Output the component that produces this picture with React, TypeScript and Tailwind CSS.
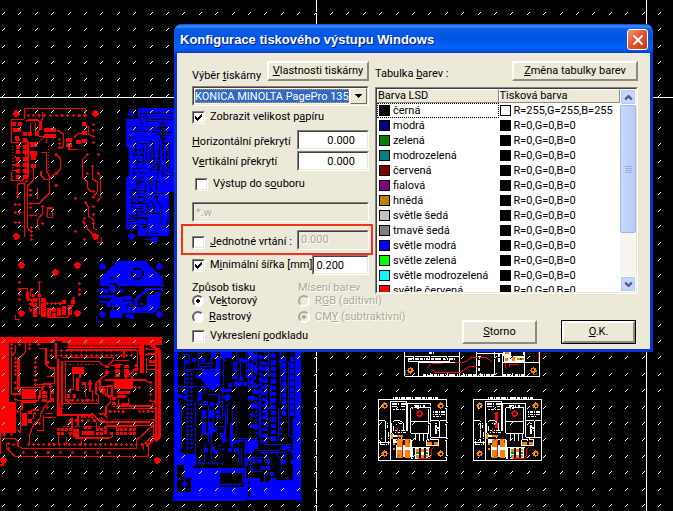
import { ChevronDown, ChevronUp, X } from "lucide-react";
import { FC, ReactNode } from "react";
import clsx from "clsx";

type TColor = { name: string; swatch: string; print: string; printSwatch: string };
type TPoint = [number, number];

const BLACK = "R=0,G=0,B=0";

const colors: TColor[] = [
  { name: "černá", swatch: "bg-black", print: "R=255,G=255,B=255", printSwatch: "bg-white" },
  { name: "modrá", swatch: "bg-[#000080]", print: BLACK, printSwatch: "bg-black" },
  { name: "zelená", swatch: "bg-[#008000]", print: BLACK, printSwatch: "bg-black" },
  { name: "modrozelená", swatch: "bg-[#008080]", print: BLACK, printSwatch: "bg-black" },
  { name: "červená", swatch: "bg-[#800000]", print: BLACK, printSwatch: "bg-black" },
  { name: "fialová", swatch: "bg-[#800080]", print: BLACK, printSwatch: "bg-black" },
  { name: "hnědá", swatch: "bg-[#c08000]", print: BLACK, printSwatch: "bg-black" },
  { name: "světle šedá", swatch: "bg-[#c0c0c0]", print: BLACK, printSwatch: "bg-black" },
  { name: "tmavě šedá", swatch: "bg-[#808080]", print: BLACK, printSwatch: "bg-black" },
  { name: "světle modrá", swatch: "bg-[#0000ff]", print: BLACK, printSwatch: "bg-black" },
  { name: "světle zelená", swatch: "bg-[#00ff00]", print: BLACK, printSwatch: "bg-black" },
  { name: "světle modrozelená", swatch: "bg-[#00ffff]", print: BLACK, printSwatch: "bg-black" },
  { name: "světle červená", swatch: "bg-[#ff0000]", print: BLACK, printSwatch: "bg-black" },
];

/* ---------- board drawing ---------- */

const RED = "#ff0000";
const BLUE = "#0000ff";

// small plus-shaped vias
const vias = (points: TPoint[]) =>
  points.map(([x, y]) => `M${x - 4} ${y}h9M${x} ${y - 4}v9`).join("");

const row = (x: number, y: number, count: number, step: number): TPoint[] =>
  Array.from({ length: count }, (_, i) => [x + i * step, y]);

const column = (x: number, y: number, count: number, step: number): TPoint[] =>
  Array.from({ length: count }, (_, i) => [x, y + i * step]);

const pads = (points: TPoint[], w = 10, h = 10) =>
  points.map(([x, y]) => `M${x - w / 2} ${y - h / 2}h${w}v${h}h-${w}z`).join("");

const holes = (points: TPoint[]) =>
  points
    .map(([x, y]) => `M${x - 7} ${y - 7}h14v14h-14zM${x - 10} ${y - 3}h20v6h-20zM${x - 3} ${y - 10}h6v20h-6z`)
    .join("");

const ticks = () => {
  let d = "";
  for (let r = 0; r < 90; r++) {
    for (let c = 0; c < 140; c++) {
      const x = Math.round(2 + c * 16.4);
      const y = Math.round(12 + r * 16.4);
      d += `M${x} ${y + 2}h1v1h-1zM${x + 1} ${y + 1}h1v1h-1zM${x + 2} ${y}h1v1h-1z`;
    }
  }
  return d;
};

type TLayerProps = { color: string; lines?: string; width?: number; fill?: string };

const Layer: FC<TLayerProps> = ({ color, lines, width = 4, fill }) => (
  <>
    {fill && <path d={fill} fill={color} />}
    {lines && <path d={lines} fill="none" stroke={color} strokeWidth={width} />}
  </>
);

const RedBoard: FC = () => (
  <g transform="translate(0 90) scale(0.33333)">
    <Layer
      color={RED}
      lines={
        "M74 88V56H257V78M73 89H35V157H73M35 245V272H65L77 260V150M83 150V268L73 282V440M52 320V285L56 280H72M100 230V270L82 288V412L94 425M77 95L84 90H112L118 96V118M127 66V88L123 94V118L112 124M91 98V128M106 100V128M118 140H133L116 157H86V260M123 187H140V242L149 262V308L118 340H88M112 294V326M123 243V256L133 268H148M168 194L181 206V237L168 252L156 258L149 266M172 120L190 132V170L182 176M140 148V160M262 194L247 209V262L262 276V294L274 305H283M277 230V266L292 276V305L280 318M292 246L301 256V325L290 335M258 338L266 352V378L280 390V414L290 420M207 170V178H233M223 145V140L235 130H250M253 103L266 112V133L278 139M142 354H158V383H142ZM127 350V372L112 390V412L120 420M112 376H92M250 390V398L266 420L280 435M304 440V458H290" +
        vias([
          ...row(85, 76, 4, 16), ...row(152, 76, 7, 17), [256, 76],
          ...column(280, 103, 4, 18), [168, 194], [168, 249], [168, 286], [226, 325], [262, 194], [295, 194], [277, 230], [262, 250], [295, 250],
          [91, 300], [91, 315], [91, 341], [91, 352], [91, 377], [46, 344], [58, 344], [46, 367], [58, 367], [127, 350], [127, 400],
          [280, 305], [280, 322], [256, 338], [280, 350], [280, 374], [253, 385], [253, 400], [280, 400], [52, 308], [52, 320],
          [46, 397], [58, 397], [94, 412], [94, 424], [94, 436], [94, 448], [226, 424], [253, 448], ...column(178, 148, 3, 12),
        ])
      }
      fill={
        holes([[49, 71], [286, 71], [49, 439], [286, 439]]) +
        pads([[41, 102], [60, 102], [46, 120], [58, 120], [75, 131], [90, 131], [110, 131], [52, 143], [75, 150], [55, 170], [76, 170], [55, 187], [76, 187], [55, 206], [76, 206], [55, 225], [76, 225], [55, 242], [76, 242], [55, 260], [76, 260], [253, 103]], 12, 12) +
        pads([[207, 150], [207, 166], [235, 157], [253, 130], [253, 153], [100, 205], [100, 228]], 16, 13) +
        "M132 114h36v11h-36zM132 132h36v11h-36zM90 158h21v12h-21zM90 183h21v14h-21z"
      }
    />
    <path d="M38 168V270M145 168V258" stroke={RED} strokeWidth="3" strokeDasharray="3 6" />
    <path d="M48 150h12M48 170h14M42 198l10 8M38 225h18M40 242h16" stroke={RED} strokeWidth="4" />
  </g>
);

const BlueBoard: FC = () => (
  <g transform="translate(0 90) scale(0.33333)">
    <path
      d={"M414 54H540V306H508V437H414V418H378V260H388V170H378V87H414z" + holes([[394, 71], [394, 439]]) + "M454 442h20v14h-20zM436 448h18v3h-18z"}
      fill={BLUE}
    />
    <path d={holes([[394, 71]])} fill="#0000c0" />
    <Layer
      color="#000"
      width={3}
      lines={
        "M422 70V98L430 106M422 70H520M440 64V96H470M452 72H520M452 88H520M392 125H470L490 145V250M384 172V250M396 128L388 136V160M408 140V190L414 200V236M418 160H440V208M430 172V226M450 150L462 160V216L474 226V262M482 100V150M496 100V150M472 112H510M472 120H500M472 128H514M480 136H506M478 150V240L494 256H520M486 160H500V226M508 150V240M445 176L452 182V250M420 260L412 268V290L400 302V320M428 258L420 268V292M392 302H430L440 312M392 312H420M436 280V330L424 342H392M452 262V300L462 310H500M470 270V300M392 330H410L420 340H442V372M392 344L404 356H430M384 370L396 382H440M450 330L462 342V370M474 318V340L486 350V380M382 394H406L418 404H440M384 404H400M410 376L420 386H440M444 400V440M436 370H484V384M486 388V412H502V394M452 432H476"
      }
    />
    <path
      d="M388 110H480M430 80H520M386 188V262M398 180H424M400 196H430M414 216H460M398 236H448M400 250H440M490 96V200M502 158V250M462 180V250M476 180V250M420 276H500M394 322H470M394 336H430M396 350H450M404 366H450M386 376H430M384 388H446M408 412H440M440 360V430M470 122V140"
      fill="none"
      stroke="#000"
      strokeWidth="5"
      strokeDasharray="6 4 3 7 9 5 3 11"
    />
  </g>
);

const SmallRedBoard: FC = () => (
  <g transform="translate(0 210) scale(0.33333)">
    <Layer
      color={RED}
      lines={
        "M46 315V328H60M55 236H83V262L100 280M118 218V312M58 218V222M83 262V270L100 268M88 300V290M140 322H202L206 316V300L222 282M220 265V280M135 270V320M150 280H185M92 240V262M206 300L216 290" +
        vias([[58, 218], [118, 218], [58, 238], [94, 238], [58, 254], [58, 268], [238, 220], [238, 238], [238, 252], [220, 265], [142, 281], [154, 281], [166, 281], [180, 281], [91, 282], [91, 300], [206, 295]])
      }
      fill={
        holes([[64, 166], [232, 166], [166, 187], [64, 310], [232, 310]]) +
        pads([[83, 252], [100, 256], [118, 256], [83, 262], [94, 284]], 10, 10) +
        pads([[106, 271], [106, 286], [106, 302], [106, 315], [131, 271], [131, 286], [131, 302], [131, 315], [147, 300], [147, 314], [162, 300], [162, 316], [177, 300], [177, 312], [192, 277], [192, 295], [192, 308], [219, 277], [210, 292], [210, 308]], 13, 13) +
        "M98 264h20v4h-20zM112 290h14v5h-14z"
      }
    />
  </g>
);

const SmallBlueBoard: FC = () => (
  <g transform="translate(0 210) scale(0.33333)">
    <path
      d={
        "M351 153H437L490 206V220H484V228H356L348 218H334L322 228H300V206zM298 254H342L352 262H368V272L384 292H430L440 282V262L448 254H462L470 246H488V240H446L410 272V290H402V268L440 234H488L480 262V292L462 309H372L348 290L338 279H298V272H330L336 264H298z" +
        holes([[307, 170], [478, 170], [307, 313], [478, 313]]) +
        pads([[340, 232], [340, 242], [306, 240], [318, 242], [364, 242], [377, 263], [390, 263], [377, 278], [390, 278], [327, 286], [337, 307], [349, 307], [360, 307], [337, 319], [349, 319], [360, 319], [385, 317], [397, 320]], 12, 12)
      }
      fill={BLUE}
    />
    <Layer
      color={BLUE}
      lines={"M289 318V334H302M300 226H326M356 226V250M330 245V226L340 220M338 280V302M370 300V316M300 275H330" + vias([[410, 268], [410, 282], [425, 282], [300, 240], [488, 225]])}
    />
    <path d="M412 174a17 17 0 1 0 1 0" fill="none" stroke="#000" strokeWidth="5" strokeDasharray="14 4" />
    <path d="M404 180h16M400 200h5M422 198h6M330 206h22M332 203h4M340 203h3" stroke="#000" strokeWidth="3" />
  </g>
);

const LargeRedBoard: FC = () => (
  <g transform="translate(0 330) scale(0.33333)">
    <path
      d={
        "M0 21H486V45H462L482 60V325L472 335H466V60L448 45H432V130H420V50H205V40H186V34H164V88H180V230L186 236V252H275V258H172V38H27V215H49V308H0z" +
        holes([[10, 391], [472, 391], [308, 181]]) +
        "M343 150h56v27h-56zM66 178h42v30h-42zM216 110h36v22h-36zM218 296h20v24h-20zM66 248h14v40h-14zM228 144h10v38h-10zM246 304h36v12h-36zM52 88h8v92h-8z"
      }
      fill={RED}
    />
    <Layer
      color={RED}
      lines={
        "M0 405H12M2 310V370L6 366M10 326H46L54 334V346L66 356H410V330L460 285V268H330M20 340V355L45 380H440L446 374V340L478 316M35 60V194H60V172M46 46V66L35 78M77 36V64L58 84M40 190H70M118 55H138V104L150 114H164V160H130M142 140H162M104 164H154M60 172H126V180M120 180V204L108 216H66V240M52 212H116V196M62 232V308L52 300M152 170V210L132 232L122 254V262L100 286L88 316V344M130 300V262H168M138 250H160M112 302H130V256M186 94V238M186 220H296V200L288 190V160L304 144L320 134V116M196 94H296L310 106H346M196 94V208L216 224M186 82H340V92L322 108M202 52H420V74M202 60H410M428 60V120M412 60V120H400M346 92H386M346 104H370M372 60V84M378 140V148L396 148V138M316 150H436L448 158H456M296 250H310L324 268H468V310L430 344V360M302 262L322 280V286H460M318 188V196L332 204V216L318 228V252H300M338 230H356V208M362 204V196M386 204V222H362M352 228H458V216L478 202M350 236H468M270 258L290 278M275 250L300 276H450M175 312V346M200 320V346M224 324H330L340 316M244 324V346M320 286V306M350 282V306M330 288H410M216 264V296M234 256V288M210 276L200 286M290 280V296M404 120L390 132H378V140M240 130V144M220 130V178H210V190M256 160V200M278 180V206M270 150V186M340 170H300M300 150V176M84 250L100 240H116M84 276L100 264V250M460 286V330L440 352M448 94H476M444 106H480M440 118H474M438 72H478M440 58H480M440 84V130"
      }
    />
    <Layer
      color={RED}
      lines={vias([
        ...row(154, 61, 17, 15), ...row(154, 76, 17, 15), ...row(85, 343, 24, 15.5), ...row(70, 367, 8, 37), [34, 43], [34, 55], [88, 43], [88, 55], [115, 43], [58, 43],
        ...column(46, 85, 5, 12), ...column(106, 85, 7, 13), ...column(46, 158, 4, 17), ...row(330, 244, 4, 13), ...row(418, 244, 4, 13), ...row(202, 211, 6, 15), ...row(210, 272, 6, 18),
        ...column(451, 158, 5, 18), [439, 43], [439, 55], ...column(408, 106, 3, 12), [12, 314], [34, 314], [26, 341], [26, 356], [40, 343], [406, 172], [418, 172], [130, 170], [150, 170], [142, 232], [118, 280], [103, 250], [52, 244],
      ])}
      fill={
        pads([[143, 98], [452, 95], [464, 95], [176, 299], [188, 299], [200, 299], [212, 299], [176, 310], [188, 310], [212, 310], [256, 293], [268, 293], [294, 299], [306, 299], [294, 310], [306, 310], [318, 293], [318, 306], [336, 310], [352, 299], [352, 311], [366, 299], [366, 311], [378, 299], [378, 311], [392, 299], [392, 311], [403, 299], [403, 311], [206, 198], [224, 198]], 9, 10) +
        pads([[134, 188], [134, 199], [134, 211], [156, 188], [156, 210], [90, 248], [90, 273], [252, 161], [270, 161], [321, 110], [321, 127], [352, 110], [352, 123], [352, 136], [380, 110], [380, 123], [380, 136], [342, 205], [342, 221], [358, 187], [370, 187], [382, 187], [358, 200], [370, 200]], 14, 10)
      }
    />
    <path d="M322 168h14v30h-14z" fill="none" stroke={RED} strokeWidth="4" />
    <path d="M196 104H290M196 211H290M190 290H300M312 290H406M230 262H288" stroke={RED} strokeWidth="5" strokeDasharray="4 8 6 5" />
    <path d="M181 226L196 240M300 246L330 276M322 108L352 96M456 216L478 236M450 320L478 344M306 270H450" stroke="#000" strokeWidth="2" />
    <path d="M180 88V220M206 46H420M474 70V320" stroke="#000" strokeWidth="2" />
  </g>
);

const LargeBlueBoard: FC = () => (
  <g transform="translate(165 345) scale(0.33333)">
    <path
      d={
        "M27 0H38V170L44 182V320L62 328H92V360L80 368H240V286L204 296V310L194 300V230L204 240V285H278V312H268V324H242V336H310V340H258V348H250V362H244V398H284V412H368V406H384V224L394 216V0H408V464H242V467H24V442H90V404L106 382H156V442H60V360H36V440H27zM110 86H92V98H104L136 134H150L164 122V0H154V72H110zM140 0h62v40h-62z" +
        holes([[187, 157]]) +
        "M256 400h28v60h-28zM312 404h58v10h-58zM170 132h30v10h-30zM165 0h30v8h-30z"
      }
      fill={BLUE}
    />
    <path d="M164 384h74v42h-74zM172 42h30v80h-30zM44 400h34v42h-34zM248 408h8v48h-8z" fill="#000" />
    <path
      d={
        pads(column(298, 38, 15, 18), 15, 11) +
        pads(column(326, 34, 14, 19), 14, 13) +
        pads(column(357, 44, 10, 18), 12, 13) +
        pads(column(381, 44, 10, 18), 10, 13) +
        pads([[88, 44], [114, 44], [64, 50], [210, 58], [210, 72], [206, 97], [227, 46], [227, 103], [240, 47], [240, 118], [194, 119], [212, 118], [225, 118], [262, 35], [274, 35], [262, 68], [274, 74], [252, 92], [262, 110], [274, 122], [270, 142], [280, 142], [254, 160], [265, 160], [262, 182], [274, 182], [262, 210], [262, 242], [274, 246], [60, 140], [106, 145], [106, 158], [124, 174], [140, 176], [118, 200], [118, 212], [138, 200], [138, 212], [158, 202], [118, 238], [118, 250], [118, 262], [138, 238], [138, 250], [138, 262], [158, 216], [150, 256], [170, 270], [176, 284], [132, 392], [112, 390], [90, 378], [60, 418], [60, 160], [44, 154]], 12, 12) +
        pads([[144, 312], [154, 322], [122, 316], [196, 314], [214, 314], [270, 348], [286, 348], [310, 348], [310, 368], [294, 370], [322, 386], [326, 404], [357, 310], [370, 310], [357, 352], [384, 352], [384, 320], [396, 320], [272, 451], [294, 451], [334, 451], [354, 451], [306, 440], [346, 425], [356, 332]], 12, 12)
      }
      fill={BLUE}
    />
    <Layer
      color={BLUE}
      width={3}
      lines={
        "M36 125H130M60 26V118M52 30H74V60M100 20V64H140M140 20V56M62 74H110M104 56H148M176 26V130L164 140V180L182 200V280L200 300M120 110V140L92 170V330M40 170V300M50 180V316M100 140V180H130V290L120 300V350M130 150H160V180H146V232L158 246H178V290L160 306M140 270V350M92 340L110 352M108 270H140M226 40V104M216 20V130M252 20V130L266 140M284 150V270L270 290M288 40V290L300 300H380M370 50V270L380 276M346 24V170M340 50H350M392 0V220M310 24V100H296M318 120V190H296M340 190V280L330 290M280 316H340L350 308H380M286 324H350L370 318H400M292 320L310 340V372M330 320L350 350V372L340 380M244 420V462H400M256 348V380H292M300 380V440M370 396V440L356 446M320 400V454M340 424V448M230 310V360M222 312V350M172 220V130M200 0V44M198 170L188 180V240M204 180V240M232 386V418H170M150 370V434M100 430H140M100 410H150M84 350V374M300 0V30M324 0V30M262 0V130M274 0V90M244 0V100M410 456V470H396M60 350V440M222 280H280"
      }
    />
    <Layer
      color={BLUE}
      width={3}
      lines={vias([
        ...column(68, 75, 19, 13), ...column(80, 75, 19, 13), ...row(88, 355, 7, 14), ...row(172, 418, 5, 13), ...column(346, 26, 4, 13), ...column(346, 218, 5, 16), ...column(274, 160, 9, 13), ...column(250, 30, 6, 16), [178, 46], [178, 20], [142, 20], [130, 56], [175, 314], [70, 336], [320, 430], [362, 438], [370, 54], ...row(92, 418, 4, 14), [250, 420], [262, 374], [256, 358], [46, 348], [58, 348], [44, 404],
      ])}
    />
    <path d="M214 178V270M106 186V262M188 176V200M264 70V250" stroke={BLUE} strokeWidth="3" strokeDasharray="3 5" />
    <path d="M256 20V130M270 26V130M286 30V150M304 30V290" stroke={BLUE} strokeWidth="8" strokeDasharray="12 8 5 9" />
  </g>
);

const PlacementBoard: FC<{ x: number; alt?: boolean }> = ({ x, alt }) => (
  <g transform={`translate(${x} 398) scale(0.33333)`}>
    <path
      d="M2 4H207V188H2zM38 188V10H86V98M90 98V16H158V68H182M98 30H152V106H98zM98 70H152M112 106V126M124 106V130M136 106V130M148 106V124M158 68V118H206M2 68H22V134H2M185 68H206V118H185zM40 76V104L46 110M70 110V126H100V150M44 70Q64 60 78 78V98M146 126H182V144H146z"
      fill="none"
      stroke="#fff"
      strokeWidth="3"
    />
    <path
      d="M44 0H180M42 18H84M42 26H80M46 34H80M44 98H86M50 104H84M164 42H200M164 50H202M166 56H192M170 90H182M172 98H184M46 84V100M56 76H76M8 122V142M14 134H40M6 140H30M32 102V140M28 74V90M120 24V32M174 74V108M108 24H142"
      fill="none"
      stroke="#fff"
      strokeWidth="4"
      strokeDasharray="5 2 9 3 3 4 12 2"
    />
    <path d="M46 124h12v10h-12zM82 122h18v28h-18zM54 142h46v34h-46zM46 110h26v8h-26zM98 148h58v34h-58z" fill="#fff" />
    <path d="M106 150h6v32h-6zM122 150h6v32h-6zM137 150h7v32h-7zM152 150h4v32h-4z" fill="#000" />
    <path
      d="M58 124h17v24h-17zM80 124h16v24h-16zM58 156h17v24h-17zM80 156h16v24h-16zM56 110h18v7h-18zM39 108h6v14h-6zM148 131h13v11h-13zM168 131h12v11h-12zM115 154h7v7h-7zM115 172h7v7h-7zM130 154h7v7h-7zM130 172h7v7h-7zM145 152h6v8h-6zM145 170h6v7h-6zM46 134h5v8h-5zM46 150h5v6h-5z"
      fill="#ff8000"
    />
    <path d="M115 163h7v5h-7zM145 162h6v5h-6z" fill="#00a000" />
    <path d="M74 128V180M96 126V136M119 181H156L162 170V152L168 148M20 94h4M60 106V90" fill="none" stroke={RED} strokeWidth="3" />
    {alt && <path d="M71 42v26M71 72v18" stroke={RED} strokeWidth="9" />}
    {[[20, 23], [188, 23], [20, 167], [188, 167]].map(([cx, cy]) => (
      <g key={`${cx}-${cy}`} fill="none" stroke="#ff8000">
        <circle cx={cx} cy={cy} r="6" strokeWidth="5" />
        <path d={`M${cx - 10} ${cy}h4M${cx + 6} ${cy}h4M${cx} ${cy - 10}v4M${cx} ${cy + 6}v4`} strokeWidth="4" />
      </g>
    ))}
    <circle cx="125" cy="47" r="7" fill="none" stroke={RED} strokeWidth="5" />
    <path d="M114 47h6M130 47h6M125 36v6M125 52v6" stroke={RED} strokeWidth="4" />
    {alt && <path d="M20 20l5-5M20 172l4-4M62 128l6-6M66 162l6-6" stroke="#40a0ff" strokeWidth="3" />}
  </g>
);

const TopPlacementBoard: FC = () => (
  <g transform="translate(370 345) scale(0.33333)">
    <path
      d="M104 0V94H509V0M104 34H268V94M146 52V94M146 52H268M268 10V94M320 10V94M374 10V94M398 52V94M398 52H464V94M464 54H509M320 26H398V52M116 38V50H240V38M464 54V20M104 20H268"
      fill="none"
      stroke="#fff"
      strokeWidth="3"
    />
    <path d="M116 43H256M176 24H196M158 90H264M276 90H320M330 90H372M400 90H462M388 28V50M374 40V80M328 34V82M400 30H420M462 22V50" stroke="#fff" strokeWidth="5" strokeDasharray="9 3 4 2 12 4" />
    <path d="M402 34h64v16h-64zM400 20h22v12h-22z" fill="#fff" />
    <path d="M172 68L182 56H216M186 74L196 82H270L296 66H322M256 54L290 50L300 38H350L366 50M406 54V68M420 66V58H446M490 44v4M506 22V50" fill="none" stroke={RED} strokeWidth="3" />
    <path d="M406 38h8v9h-8zM425 37h10v11h-10zM442 39h7v7h-7zM456 39h6v7h-6zM404 22h12v6h-12z" fill="#ff8000" />
    <path d="M106 76V88H116M488 88H500V78" fill="none" stroke="#008000" strokeWidth="3" />
    <path d="M450 39h5v7h-5z" fill="#008000" />
    {[121, 490].map((cx) => (
      <g key={cx} fill="none" stroke="#ff8000">
        <circle cx={cx} cy="76" r="6" strokeWidth="5" />
        <path d={`M${cx - 10} 76h4M${cx + 6} 76h4M${cx} 66v4M${cx} 82v4`} strokeWidth="4" />
      </g>
    ))}
  </g>
);

const BoardCanvas: FC = () => (
  <svg className="absolute inset-0 size-full" shapeRendering="crispEdges" aria-hidden="true">
    <rect width="100%" height="100%" fill="#000" />
    <RedBoard />
    <BlueBoard />
    <SmallRedBoard />
    <SmallBlueBoard />
    <LargeRedBoard />
    <LargeBlueBoard />
    <TopPlacementBoard />
    <PlacementBoard x={378} />
    <PlacementBoard x={473} alt />
    <rect x="316" y="0" width="1" height="100%" fill="#fff" />
    <rect x="646" y="0" width="1" height="100%" fill="#fff" />
    <rect x="0" y="97" width="100%" height="1" fill="#fff" />
    <path d={ticks()} fill="#fff" className="mix-blend-difference" />
  </svg>
);

/* ---------- dialog controls ---------- */

const sunken = "border border-t-[#808080] border-l-[#808080] border-b-white border-r-white";
const sunkenInner = "border border-t-[#404040] border-l-[#404040] border-b-[#ece9d8] border-r-[#ece9d8]";
const disabledText = "text-[#aca899] [text-shadow:1px_1px_0_#fff]";

type TButtonProps = { children: ReactNode; className?: string; isDefault?: boolean };

const Button: FC<TButtonProps> = ({ children, className, isDefault }) => (
  <button
    type="button"
    className={clsx(
      "bg-[#ece9d8] text-center whitespace-nowrap",
      isDefault && "border border-black",
      className
    )}
  >
    <span className="flex size-full items-center justify-center border-2 border-t-white border-l-white border-b-[#8d8a7d] border-r-[#8d8a7d]">
      <span>{children}</span>
    </span>
  </button>
);

type TCheckProps = { id: string; children: ReactNode; checked?: boolean; className?: string };

const Checkbox: FC<TCheckProps> = ({ id, children, checked, className }) => (
  <div className={clsx("flex h-4 items-center gap-[5px]", className)}>
    <span className={clsx("grid size-[13px] shrink-0", sunken)}>
      <input
        id={id}
        type="checkbox"
        defaultChecked={checked}
        className={clsx("peer col-start-1 row-start-1 size-full appearance-none bg-white", sunkenInner)}
      />
      <svg
        viewBox="0 0 11 11"
        className="pointer-events-none col-start-1 row-start-1 size-full opacity-0 peer-checked:opacity-100"
        shapeRendering="crispEdges"
      >
        <path d="M2 4v3l2 2 5-5V1L4 6z" />
      </svg>
    </span>
    <label htmlFor={id} className="whitespace-nowrap">
      {children}
    </label>
  </div>
);

type TRadioProps = { id: string; name: string; children: ReactNode; checked?: boolean; disabled?: boolean };

const Radio: FC<TRadioProps> = ({ id, name, children, checked, disabled }) => (
  <div className="flex h-4 items-center gap-[5px]">
    <input
      id={id}
      name={name}
      type="radio"
      defaultChecked={checked}
      disabled={disabled}
      className="size-3 shrink-0 appearance-none rounded-full border-2 border-t-[#606060] border-l-[#606060] border-r-white border-b-white bg-white checked:bg-[radial-gradient(circle,#000_2px,#fff_2px)] disabled:border-t-[#aca899] disabled:border-l-[#aca899] disabled:bg-[#ece9d8] disabled:checked:bg-[radial-gradient(circle,#aca899_2px,#ece9d8_2px)]"
    />
    <label htmlFor={id} className={clsx("whitespace-nowrap", disabled && disabledText)}>
      {children}
    </label>
  </div>
);

type TFieldProps = { id: string; value: string; disabled?: boolean; className?: string; inputClassName?: string; label?: string };

const Field: FC<TFieldProps> = ({ id, value, disabled, className, inputClassName, label }) => (
  <span className={clsx("block h-5", sunken, className)}>
    <input
      id={id}
      type="text"
      defaultValue={value}
      disabled={disabled}
      aria-label={label}
      className={clsx(
        "block size-full px-[2px]",
        sunkenInner,
        disabled ? ["bg-[#ece9d8]", disabledText] : "bg-white",
        inputClassName
      )}
    />
  </span>
);

const ColorTable: FC = () => (
  <div className={clsx("h-[207px]", sunken)}>
    <div className={clsx("flex size-full bg-white", sunkenInner)}>
      <div className="min-w-0 flex-1 overflow-hidden">
        <table className="w-full table-fixed border-separate border-spacing-0" aria-labelledby="table-label">
          <thead>
            <tr>
              {["Barva LSD", "Tisková barva"].map((title) => (
                <th
                  key={title}
                  className="h-[14px] border border-t-white border-l-white border-r-[#8d8a7d] border-b-[#8d8a7d] bg-[#ece9d8] p-0 text-left leading-3 font-normal"
                >
                  {title}
                </th>
              ))}
            </tr>
          </thead>
          <tbody>
            {colors.map((color, i) => (
              <tr key={color.name}>
                <td className={clsx("p-0", i === 0 && "outline outline-dotted -outline-offset-1 outline-black")}>
                  <span className="flex h-[15px] items-center gap-[3px] pl-[2px] leading-[15px] whitespace-nowrap">
                    <span className={clsx("size-[11px] shrink-0 border border-black", color.swatch)} />
                    {color.name}
                  </span>
                </td>
                <td className="p-0">
                  <span className="flex h-[15px] items-center gap-[3px] pl-px leading-[15px] whitespace-nowrap">
                    <span className={clsx("size-[11px] shrink-0 border border-black", color.printSwatch)} />
                    {color.print}
                  </span>
                </td>
              </tr>
            ))}
          </tbody>
        </table>
      </div>

      <div className="flex w-4 shrink-0 flex-col bg-[#f6f5f0]">
        <button type="button" aria-label="Nahoru" className="flex h-4 items-center justify-center rounded-xs border border-white bg-[#c6d5fd] text-[#4d6185] shadow-[inset_0_0_0_1px_#b4c8f6]">
          <ChevronUp className="size-[11px]" strokeWidth={5} />
        </button>
        <div className="flex h-32 flex-col items-center justify-center gap-px rounded-xs border border-[#9fb5e8] bg-linear-to-r from-[#c9d8fd] to-[#b8cbf8]">
          {[1, 2, 3, 4].map((grip) => (
            <span key={grip} className="h-px w-[7px] border-b border-[#8cb0f8] bg-[#eef4fe]" />
          ))}
        </div>
        <button type="button" aria-label="Dolů" className="mt-auto flex h-4 items-center justify-center rounded-xs border border-white bg-[#c6d5fd] text-[#4d6185] shadow-[inset_0_0_0_1px_#b4c8f6]">
          <ChevronDown className="size-[11px]" strokeWidth={5} />
        </button>
      </div>
    </div>
  </div>
);

const PrintDialog: FC = () => (
  <div
    role="dialog"
    aria-labelledby="dialog-title"
    className="absolute top-6 left-[174px] w-[479px] rounded-t-lg border-x-3 border-b-3 border-[#0831d9] bg-[#0831d9]"
  >
    <header className="-mx-[3px] flex h-[29px] items-center justify-between rounded-t-lg bg-[linear-gradient(#0a4bd0_0%,#3a8cf8_7%,#0a5ce8_18%,#0054e3_50%,#0362fb_80%,#0455e8_92%,#0138b8_100%)] pt-[2px] pr-[5px] pl-[6px]">
      <h1
        id="dialog-title"
        className="font-['Liberation_Sans',sans-serif] text-[13px] font-bold whitespace-nowrap text-white [text-shadow:1px_1px_0_#0a1883]"
      >
        Konfigurace tiskového výstupu Windows
      </h1>
      <button
        type="button"
        aria-label="Zavřít"
        className="flex size-[21px] items-center justify-center rounded-[3px] border border-white bg-linear-to-br from-[#f0907a] via-[#e2512c] to-[#c43a12] text-white"
      >
        <X className="size-4" strokeWidth={3} />
      </button>
    </header>

    <form className="flex gap-[6px] bg-[#ece9d8] pt-2 pr-3 pb-[5px] pl-[15px]">
      <div className="flex w-[177px] shrink-0 flex-col">
        <div className="flex h-5 items-center justify-between">
          <label htmlFor="printer" className="pt-[10px]">
            Výběr <u>t</u>iskárny
          </label>
          <Button className="h-5 w-[102px]">
            <u>V</u>lastnosti tiskárny
          </Button>
        </div>

        <div className={clsx("mt-[5px] h-5", sunken)}>
          <div className={clsx("flex size-full bg-white", sunkenInner)}>
            <select
              id="printer"
              className="m-px min-w-0 flex-1 appearance-none overflow-hidden bg-[#316ac5] leading-none text-clip whitespace-nowrap text-white outline outline-dotted -outline-offset-1 outline-[#e0a040]"
            >
              <option>KONICA MINOLTA PagePro 1350W</option>
            </select>
            <span className="pointer-events-none flex w-[17px] items-center justify-center border border-t-white border-l-white border-r-[#716f64] border-b-[#716f64] bg-[#ece9d8]">
              <svg viewBox="0 0 7 4" className="h-1 w-[7px]" shapeRendering="crispEdges">
                <path d="M0 0h7L3.5 4z" />
              </svg>
            </span>
          </div>
        </div>

        <Checkbox id="show-size" checked className="mt-[3px]">
          Zobrazit velikost p<u>a</u>píru
        </Checkbox>

        <div className="mt-[5px] flex items-center justify-between">
          <label htmlFor="overlap-x" className="pt-1">
            <u>H</u>orizontální překrytí
          </label>
          <Field id="overlap-x" value="0.000" className="w-[72px]" inputClassName="pr-3 text-right" />
        </div>
        <div className="mt-px flex items-center justify-between">
          <label htmlFor="overlap-y" className="pt-px">
            V<u>e</u>rtikální překrytí
          </label>
          <Field id="overlap-y" value="0.000" className="w-[72px]" inputClassName="pr-3 text-right" />
        </div>

        <Checkbox id="to-file" className="mt-[5px] ml-[3px]">
          Výstup do s<u>o</u>uboru
        </Checkbox>
        <Field id="file-name" value="*.w" disabled label="Soubor" className="mt-[10px]" />

        <div className="mt-[2px] -mr-1 -ml-[11px] flex h-[31px] items-center justify-between border-2 border-[#f5311c] pr-[2px] pl-[9px]">
          <Checkbox id="single-drill" className="pt-[5px]">
            <u>J</u>ednotné vrtání :
          </Checkbox>
          <Field id="drill-size" value="0.000" disabled label="Průměr vrtání" className="w-[72px]" />
        </div>

        <div className="flex items-center justify-between">
          <Checkbox id="min-width" checked>
            M<u>i</u>nimální šířka [mm]
          </Checkbox>
          <Field id="min-width-value" value="0.200" label="Minimální šířka" className="w-[57px]" />
        </div>

        <div className="mt-[5px] grid grid-cols-[106px_1fr]">
          <fieldset>
            <legend className="h-[13px] leading-4">Způsob tisku</legend>
            <Radio id="vector" name="print-mode" checked>
              Ve<u>k</u>torový
            </Radio>
            <Radio id="raster" name="print-mode">
              <u>R</u>astrový
            </Radio>
          </fieldset>
          <fieldset disabled className="min-w-0">
            <legend className={clsx("h-[13px] leading-4 whitespace-nowrap", disabledText)}>Mísení barev</legend>
            <Radio id="rgb" name="mixing" disabled>
              R<u>G</u>B (aditivní)
            </Radio>
            <Radio id="cmy" name="mixing" checked disabled>
              CM<u>Y</u> (subtraktivní)
            </Radio>
          </fieldset>
        </div>

        <Checkbox id="background" className="mt-[3px]">
          Vykreslení <u>p</u>odkladu
        </Checkbox>
      </div>

      <div className="flex min-w-0 flex-1 flex-col">
        <div className="mb-[6px] flex h-5 items-center justify-between">
          <span id="table-label" className="pt-[5px]">
            Tabulka <u>b</u>arev :
          </span>
          <Button className="h-5 w-[126px]">
            <u>Z</u>měna tabulky barev
          </Button>
        </div>
        <ColorTable />
        <div className="mt-[26px] flex justify-end gap-6 pr-[2px]">
          <Button className="h-6 w-[75px]">
            <u>S</u>torno
          </Button>
          <Button className="h-6 w-[75px]" isDefault>
            <u>O</u>.K.
          </Button>
        </div>
      </div>
    </form>
  </div>
);

const App: FC = () => (
  <main className="relative min-h-screen overflow-hidden bg-black font-[Roboto,'Liberation_Sans',sans-serif] text-[11px] leading-4 text-black">
    <BoardCanvas />
    <PrintDialog />
  </main>
);

export default App;
